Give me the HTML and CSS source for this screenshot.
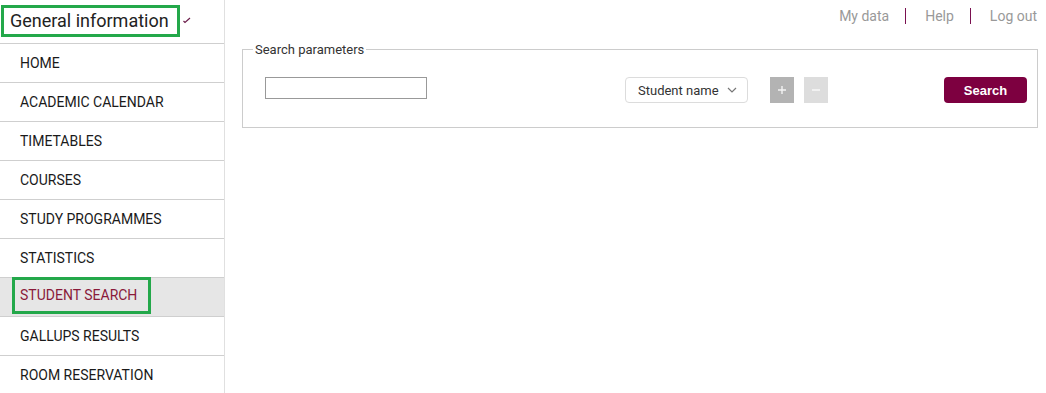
FILE: index.html
```html
<!DOCTYPE html>
<html>
<head>
<meta charset="utf-8">
<link rel="stylesheet" href="styles.css">
</head>
<body>
<div class="page">
  <aside class="sidebar">
    <div class="side-head">
      <span class="head-box">General information</span>
      <svg class="head-chev" width="8" height="8" viewBox="0 0 8 8"><polyline points="0.5,5 2,6.5 7,2" fill="none" stroke="#6b1d4a" stroke-width="1.2"/></svg>
    </div>
    <nav class="nav">
      <div class="nav-item">HOME</div>
      <div class="nav-item">ACADEMIC CALENDAR</div>
      <div class="nav-item">TIMETABLES</div>
      <div class="nav-item">COURSES</div>
      <div class="nav-item">STUDY PROGRAMMES</div>
      <div class="nav-item">STATISTICS</div>
      <div class="nav-item active"><span class="active-box">STUDENT SEARCH</span></div>
      <div class="nav-item">GALLUPS RESULTS</div>
      <div class="nav-item">ROOM RESERVATION</div>
    </nav>
  </aside>
  <main class="main">
    <div class="toplinks">
      <span class="toplink">My data</span>
      <span class="sep"></span>
      <span class="toplink">Help</span>
      <span class="sep"></span>
      <span class="toplink">Log out</span>
    </div>
    <fieldset class="params">
      <legend class="params-legend">Search parameters</legend>
      <div class="params-row">
        <input class="text-input" type="text">
        <div class="select">Student name
          <svg class="select-chev" width="10" height="6" viewBox="0 0 10 6"><polyline points="1,1 5,5 9,1" fill="none" stroke="#777" stroke-width="1.2"/></svg>
        </div>
        <div class="sq-btn plus">
          <svg width="10" height="10" viewBox="0 0 10 10"><path d="M5 1v8M1 5h8" stroke="#fff" stroke-width="1.4" opacity="0.85"/></svg>
        </div>
        <div class="sq-btn minus">
          <svg width="10" height="10" viewBox="0 0 10 10"><path d="M1 5h8" stroke="#fff" stroke-width="1.4" opacity="0.85"/></svg>
        </div>
        <button class="search-btn">Search</button>
      </div>
    </fieldset>
  </main>
</div>
</body>
</html>
```
FILE: styles.css
```css
html, body {
  margin: 0;
  padding: 0;
  background: #fff;
}
body {
  font-family: Roboto, "Liberation Sans", Arial, sans-serif;
  color: #222;
}
.page {
  display: flex;
  height: 393px;
}
.sidebar {
  width: 224px;
  border-right: 1px solid #e0e0e0;
  flex-shrink: 0;
}
.side-head {
  border-bottom: 1px solid #cfcfcf;
  display: flex;
  align-items: flex-start;
  padding-left: 1px;
  box-sizing: border-box;
  height: 44px;
}
.head-box {
  margin-top: 5px;
  border: 3px solid #23a84a;
  height: 32px;
  box-sizing: border-box;
  width: 179px;
  padding-left: 6px;
  font-size: 18px;
  line-height: 26px;
  color: #222;
}
.head-chev {
  margin-top: 16px;
  margin-left: 3px;
}
.nav-item {
  height: 39px;
  box-sizing: border-box;
  border-bottom: 1px solid #cfcfcf;
  display: flex;
  align-items: center;
  padding-left: 20px;
  padding-bottom: 1px;
  font-size: 14px;
  color: #1a1a1a;
}
.nav-item.active {
  background: #e6e6e6;
  color: #8a1a3a;
  align-items: flex-start;
  padding-bottom: 0;
}
.active-box {
  margin-left: -8px;
  margin-top: -1px;
  border: 3px solid #23a84a;
  height: 37px;
  box-sizing: border-box;
  padding: 0 11px 0 5px;
  line-height: 31px;
}
.main {
  flex: 1;
  padding: 0 8px 0 17px;
}
.toplinks {
  display: flex;
  justify-content: flex-end;
  align-items: center;
  height: 32px;
  padding-right: 1px;
  font-size: 14px;
  color: #999;
}
.sep {
  width: 1px;
  height: 16px;
  background: #7a1050;
  margin: 0 19px 0 16px;
}
.params {
  margin: 10px 0 0 0;
  padding: 0;
  border: 1px solid #cccccc;
  height: 86px;
  box-sizing: border-box;
}
.params-legend {
  margin-left: 10px;
  padding: 0 2px;
  font-size: 13px;
  color: #333;
  line-height: 15px;
}
.params-row {
  display: flex;
  align-items: flex-start;
  padding: 20px 10px 0 22px;
}
.text-input {
  width: 162px;
  height: 22px;
  box-sizing: border-box;
  border: 1px solid #999;
  margin: 0;
  padding: 0 4px;
}
.select {
  margin-left: 198px;
  width: 123px;
  height: 26px;
  box-sizing: border-box;
  border: 1px solid #dcdcdc;
  border-radius: 4px;
  display: flex;
  align-items: center;
  padding-left: 12px;
  font-size: 13px;
  color: #333;
}
.select-chev {
  margin-left: 8px;
}
.sq-btn {
  width: 24px;
  height: 26px;
  display: flex;
  align-items: center;
  justify-content: center;
}
.plus {
  background: #b3b3b3;
  margin-left: 22px;
}
.minus {
  background: #dddddd;
  margin-left: 10px;
}
.search-btn {
  margin-left: auto;
  width: 83px;
  height: 26px;
  border: none;
  border-radius: 4px;
  background: #7d0040;
  color: #fff;
  font-family: "Liberation Sans", Arial, sans-serif;
  font-weight: bold;
  font-size: 13px;
  padding: 0;
}
```
